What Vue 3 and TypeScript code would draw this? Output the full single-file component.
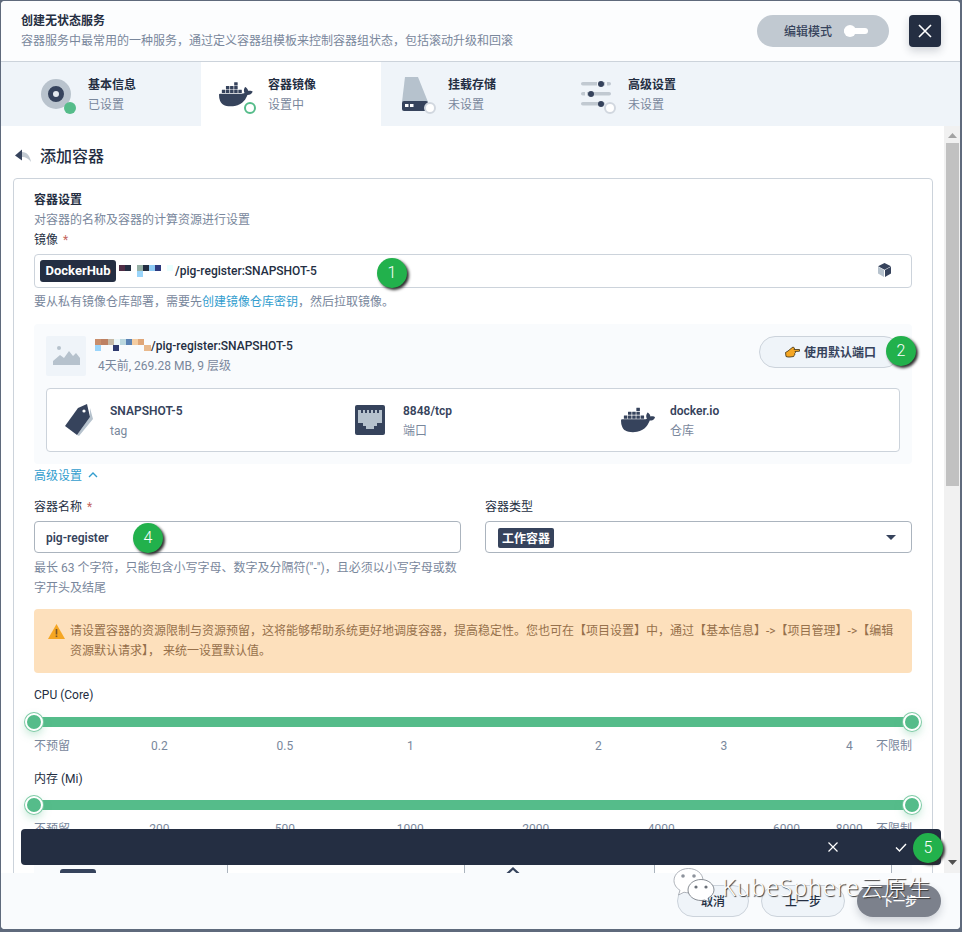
<script setup lang="ts">
interface Mark { label: string; pos: number }
interface Tab { title: string; sub: string; kind: string }

const tabs: Tab[] = [
  { title: '基本信息', sub: '已设置', kind: 'disk' },
  { title: '容器镜像', sub: '设置中', kind: 'docker' },
  { title: '挂载存储', sub: '未设置', kind: 'storage' },
  { title: '高级设置', sub: '未设置', kind: 'sliders' },
]
const cpuMarks: Mark[] = [
  { label: '0.2', pos: 1 }, { label: '0.5', pos: 2 }, { label: '1', pos: 3 },
  { label: '2', pos: 4.5 }, { label: '3', pos: 5.5 }, { label: '4', pos: 6.5 },
]
const memMarks: Mark[] = [
  { label: '200', pos: 1 }, { label: '500', pos: 2 }, { label: '1000', pos: 3 },
  { label: '2000', pos: 4 }, { label: '4000', pos: 5 }, { label: '6000', pos: 6 }, { label: '8000', pos: 6.5 },
]
const left = (m: Mark): string => `${(m.pos / 7) * 100}%`
const whale = 'M13.983 11.078h2.119a.186.186 0 00.186-.185V9.006a.186.186 0 00-.186-.186h-2.119a.185.185 0 00-.185.185v1.888c0 .102.083.185.185.185m-2.954-5.43h2.118a.186.186 0 00.186-.186V3.574a.186.186 0 00-.186-.185h-2.118a.185.185 0 00-.185.185v1.888c0 .102.082.185.185.186m0 2.716h2.118a.187.187 0 00.186-.186V6.29a.186.186 0 00-.186-.185h-2.118a.185.185 0 00-.185.185v1.887c0 .102.082.185.185.186m-2.93 0h2.12a.186.186 0 00.184-.186V6.29a.185.185 0 00-.185-.185H8.1a.185.185 0 00-.185.185v1.887c0 .102.083.185.185.186m-2.964 0h2.119a.186.186 0 00.185-.186V6.29a.185.185 0 00-.185-.185H5.136a.186.186 0 00-.186.185v1.887c0 .102.084.185.186.186m5.893 2.715h2.118a.186.186 0 00.186-.185V9.006a.186.186 0 00-.186-.186h-2.118a.185.185 0 00-.185.185v1.888c0 .102.082.185.185.185m-2.93 0h2.12a.185.185 0 00.184-.185V9.006a.185.185 0 00-.184-.186h-2.12a.185.185 0 00-.184.185v1.888c0 .102.083.185.185.185m-2.964 0h2.119a.185.185 0 00.185-.185V9.006a.185.185 0 00-.184-.186h-2.12a.186.186 0 00-.186.186v1.887c0 .102.084.185.186.185m-2.92 0h2.12a.185.185 0 00.184-.185V9.006a.185.185 0 00-.184-.186h-2.12a.185.185 0 00-.184.185v1.888c0 .102.082.185.185.185M23.763 9.89c-.065-.051-.672-.51-1.954-.51-.338.001-.676.03-1.01.087-.248-1.7-1.653-2.53-1.716-2.566l-.344-.199-.226.327c-.284.438-.49.922-.612 1.43-.23.97-.09 1.882.403 2.661-.595.332-1.55.413-1.744.42H.751a.751.751 0 00-.75.748 11.376 11.376 0 00.692 4.062c.545 1.428 1.355 2.48 2.41 3.124 1.18.723 3.1 1.137 5.275 1.137.983.003 1.963-.086 2.93-.266a12.248 12.248 0 003.823-1.389c.98-.567 1.86-1.288 2.61-2.136 1.252-1.418 1.998-2.997 2.553-4.4h.221c1.372 0 2.215-.549 2.68-1.009.309-.293.55-.65.707-1.046l.098-.288Z'
</script>

<template>
  <div class="screen">
    <div class="modal">
      <header class="head">
        <div class="head-text">
          <div class="strong">创建无状态服务</div>
          <div class="muted">容器服务中最常用的一种服务，通过定义容器组模板来控制容器组状态，包括滚动升级和回滚</div>
        </div>
        <div class="edit-mode">
          <span class="nudge">编辑模式</span>
          <span class="toggle"><i></i></span>
        </div>
        <button class="close">
          <svg width="14" height="14" viewBox="0 0 14 14"><path d="M1 1l12 12M13 1L1 13" stroke="#fff" stroke-width="1.6" fill="none" /></svg>
        </button>
      </header>

      <nav class="tabs">
        <div v-for="(t, i) in tabs" :key="t.kind" class="tab" :class="{ active: i === 1, first: i === 0 }">
          <div class="tab-icon">
            <svg v-if="t.kind === 'disk'" width="40" height="40" viewBox="0 0 40 40">
              <circle cx="20" cy="20" r="15" fill="#b9c3cd" />
              <circle cx="20" cy="20" r="5.500" fill="#e4e9ee" stroke="#36435c" stroke-width="5" />
              <circle cx="34" cy="34" r="6" fill="#55bc8a" />
            </svg>
            <svg v-else-if="t.kind === 'docker'" width="40" height="40" viewBox="0 0 40 40">
              <g transform="translate(3 3.500) scale(1.4)"><path :d="whale" fill="#36435c" /></g>
              <circle cx="34" cy="34" r="5" fill="#fff" stroke="#55bc8a" stroke-width="2" />
            </svg>
            <svg v-else-if="t.kind === 'storage'" width="40" height="40" viewBox="0 0 40 40">
              <path d="M9 3h13l10 25H6z" fill="#b6c2cd" />
              <rect x="6" y="27" width="26" height="10" rx="2" fill="#36435c" />
              <rect x="9" y="30" width="3.500" height="3" fill="#fff" />
              <rect x="14" y="30" width="3.500" height="3" fill="#fff" />
              <circle cx="34" cy="34" r="5" fill="#fff" stroke="#d1d7df" stroke-width="2" />
            </svg>
            <svg v-else width="40" height="40" viewBox="0 0 40 40">
              <g fill="#c1c9d1">
                <rect x="5" y="8" width="30" height="3.600" rx="1.800" />
                <rect x="5" y="18" width="30" height="3.600" rx="1.800" />
                <rect x="5" y="28" width="24" height="3.600" rx="1.800" />
              </g>
              <g fill="#f0f4f8">
                <rect x="21" y="8" width="2" height="4" /><rect x="29" y="8" width="2" height="4" />
                <rect x="9" y="18" width="2" height="4" />
              </g>
              <g fill="#36435c">
                <circle cx="25" cy="10" r="3" /><circle cx="15" cy="20" r="3" /><circle cx="25" cy="30" r="3" />
              </g>
              <circle cx="34" cy="34" r="5" fill="#fff" stroke="#d1d7df" stroke-width="2" />
            </svg>
          </div>
          <div>
            <div class="strong">{{ t.title }}</div>
            <div class="muted">{{ t.sub }}</div>
          </div>
        </div>
      </nav>

      <div class="main">
        <div class="content">
          <div class="back-row">
            <svg width="16" height="14" viewBox="0 0 16 14">
              <path d="M7 3c5 0 8 4 9 10-2-3-5-5-9-5z" fill="#c1c9d1" />
              <path d="M0 6.500L7 .5v11z" fill="#36435c" />
            </svg>
            <span class="nudge">添加容器</span>
          </div>

          <section class="card">
            <div class="strong">容器设置</div>
            <div class="muted">对容器的名称及容器的计算资源进行设置</div>
            <div class="label">镜像 <em>*</em></div>

            <div class="field image-field">
              <span class="tag">DockerHub</span>
              <svg class="blur-a" width="56" height="12" viewBox="0 0 56 12">
                <rect x="0" y="0" width="6" height="6" fill="#4f2d45" />
                <rect x="6" y="0" width="6" height="6" fill="#242e42" />
                <rect x="18" y="0" width="6" height="6" fill="#96b0a5" />
                <rect x="24" y="0" width="6" height="6" fill="#242e42" />
                <rect x="30" y="0" width="6" height="6" fill="#8ecbf5" />
                <rect x="36" y="0" width="6" height="6" fill="#2e3a7e" />
                <rect x="48" y="0" width="6" height="6" fill="#eaffff" />
                <rect x="18" y="6" width="6" height="6" fill="#9ad5fb" />
              </svg>
              <span class="image-name">/pig-register:SNAPSHOT-5</span>
              <svg class="cube" width="13" height="14" viewBox="0 0 13 14">
                <path d="M6.500 0L13 3.300 6.500 6.800 0 3.300z" fill="#36435c" />
                <path d="M0 3.800l6 3.300V14L0 10.600z" fill="#b6c2cd" />
                <path d="M13 3.800L7 7.100V14l6-3.400z" fill="#36435c" />
              </svg>
              <span class="badge b1">1</span>
            </div>
            <div class="hint-one muted">要从私有镜像仓库部署，需要先<a>创建镜像仓库密钥</a>，然后拉取镜像。</div>

            <div class="panel">
              <div class="panel-head">
                <div class="thumb">
                  <svg width="40" height="40" viewBox="0 0 40 40" fill="#b6c2cd">
                    <circle cx="13" cy="12" r="2" />
                    <path d="M7 29v-4l7-6 4 3 5-7 4 5 3-3 4 5v7z" />
                  </svg>
                </div>
                <div class="image-text">
                  <div class="image-line">
                    <svg width="56" height="18" viewBox="0 0 56 18">
                      <rect x="0" y="2" width="6" height="6" fill="#c98e6c" />
                      <rect x="6" y="2" width="7" height="6" fill="#bd8163" />
                      <rect x="13" y="2" width="6" height="6" fill="#c5baa7" />
                      <rect x="19" y="2" width="6" height="6" fill="#eaf6f8" />
                      <rect x="25" y="2" width="6" height="6" fill="#bcd8df" />
                      <rect x="31" y="2" width="6" height="6" fill="#5a82b4" />
                      <rect x="37" y="2" width="6" height="6" fill="#f4cda2" />
                      <rect x="43" y="2" width="6" height="6" fill="#dfa678" />
                      <rect x="49" y="8" width="7" height="6" fill="#e9b98c" />
                      <rect x="0" y="8" width="6" height="6" fill="#9ad5fb" />
                      <rect x="18" y="8" width="6" height="6" fill="#2e3a6e" />
                    </svg>
                    <span class="image-name">/pig-register:SNAPSHOT-5</span>
                  </div>
                  <div class="muted meta">4天前, 269.28 MB, 9 层级</div>
                </div>
                <button class="default-port">
                  <svg width="15" height="12" viewBox="0 0 15 12">
                    <path d="M.5 6.500L3 5l3-2.500L8 1l1.500 1L9 3.500h5.500v1.700L10 5.500l.5 1-.8 1 .2 1.200-1 .8-.2 1L5 11H3L1 10.500z" fill="#f5a623" stroke="#3a2d10" stroke-width=".8" />
                  </svg>
                  <span class="nudge">使用默认端口</span>
                  <span class="badge b2">2</span>
                </button>
              </div>

              <div class="details">
                <div class="detail">
                  <div class="detail-icon tag-ico">
                    <svg width="30" height="34" viewBox="0 0 30 34">
                      <path d="M26 5l3 11-14 17-2-1 13-18z" fill="#b6c2cd" />
                      <path d="M14 5l9-4 3 13-13 18L1 23z" fill="#36435c" />
                      <circle cx="20" cy="8" r="1.600" fill="#fff" />
                    </svg>
                  </div>
                  <div><div class="d-title">SNAPSHOT-5</div><div class="muted">tag</div></div>
                </div>
                <div class="detail">
                  <div class="detail-icon port-ico">
                    <svg width="30" height="30" viewBox="0 0 30 30">
                      <rect width="30" height="30" rx="2" fill="#36435c" />
                      <path d="M3 5h24v13h-5v3h-3v3h-8v-3H8v-3H3z" fill="#b6c2cd" />
                      <path d="M6 5h2v3H6zM10 5h2v3h-2zM14 5h2v3h-2zM18 5h2v3h-2zM22 5h2v3h-2z" fill="#36435c" />
                    </svg>
                  </div>
                  <div><div class="d-title">8848/tcp</div><div class="muted">端口</div></div>
                </div>
                <div class="detail">
                  <div class="detail-icon">
                    <svg width="34" height="34" viewBox="0 0 24 24"><path :d="whale" fill="#36435c" /></svg>
                  </div>
                  <div><div class="d-title">docker.io</div><div class="muted">仓库</div></div>
                </div>
              </div>
            </div>

            <div class="advanced">
              <a class="nudge">高级设置</a>
              <svg width="10" height="6" viewBox="0 0 10 6"><path d="M1 5l4-4 4 4" stroke="#329dce" stroke-width="1.400" fill="none" /></svg>
            </div>

            <div class="two-col">
              <div>
                <div class="label">容器名称 <em>*</em></div>
                <div class="field strong-field name-field">
                  <span class="d-title">pig-register</span>
                  <span class="badge b4">4</span>
                </div>
                <div class="muted name-hint">最长 63 个字符，只能包含小写字母、数字及分隔符("-")，且必须以小写字母或数字开头及结尾</div>
              </div>
              <div>
                <div class="label">容器类型</div>
                <div class="field strong-field type-field">
                  <span class="type-tag">工作容器</span>
                  <svg width="10" height="5" viewBox="0 0 10 5"><path d="M0 0h10L5 5z" fill="#36435c" /></svg>
                </div>
              </div>
            </div>

            <div class="alert">
              <svg width="17" height="15" viewBox="0 0 17 15">
                <path d="M8.500 0L17 15H0z" fill="#f5a623" />
                <rect x="7.700" y="5" width="1.600" height="5.500" fill="#79542a" />
                <rect x="7.700" y="11.500" width="1.600" height="1.600" fill="#79542a" />
              </svg>
              <p>请设置容器的资源限制与资源预留，这将能够帮助系统更好地调度容器，提高稳定性。您也可在【项目设置】中，通过【基本信息】-&gt;【项目管理】-&gt;【编辑资源默认请求】， 来统一设置默认值。</p>
            </div>

            <div class="slider-label cpu">CPU (Core)</div>
            <div class="track"><i class="handle start"></i><i class="handle end"></i></div>
            <div class="marks">
              <span class="edge">不预留</span>
              <span v-for="m in cpuMarks" :key="m.label" class="mark" :style="{ left: left(m) }">{{ m.label }}</span>
              <span class="edge">不限制</span>
            </div>

            <div class="slider-label mem">内存 (Mi)</div>
            <div class="track"><i class="handle start"></i><i class="handle end"></i></div>
            <div class="marks">
              <span class="edge">不预留</span>
              <span v-for="m in memMarks" :key="m.label" class="mark" :style="{ left: left(m) }">{{ m.label }}</span>
              <span class="edge">不限制</span>
            </div>

            <div class="under-row">
              <div class="uc"><i class="mini-tag"></i></div>
              <div class="uc white"></div>
              <div class="uc caret-cell">
                <svg width="14" height="8" viewBox="0 0 14 8"><path d="M1 7l6-5.500L13 7" stroke="#36435c" stroke-width="2.200" fill="none" /></svg>
              </div>
              <div class="uc white"></div>
              <div class="uc"></div>
            </div>
          </section>
        </div>

        <aside class="scrollbar">
          <svg width="9" height="5" viewBox="0 0 9 5"><path d="M4.500 0L9 5H0z" fill="#a3a3a3" /></svg>
          <div class="thumb-bar"></div>
          <div class="scroll-space"></div>
          <svg width="9" height="5" viewBox="0 0 9 5"><path d="M0 0h9L4.500 5z" fill="#505050" /></svg>
        </aside>
      </div>

      <footer class="foot">
        <button class="pill">取消</button>
        <button class="pill">上一步</button>
        <button class="pill primary">下一步</button>
      </footer>

      <div class="confirm-bar">
        <svg width="10" height="10" viewBox="0 0 10 10"><path d="M.5.5l9 9M9.500.5l-9 9" stroke="#fff" stroke-width="1.200" fill="none" /></svg>
        <svg width="12" height="9" viewBox="0 0 12 9"><path d="M1 4.500l3.500 3.500L11 1" stroke="#fff" stroke-width="1.400" fill="none" /></svg>
        <span class="badge b5">5</span>
      </div>
    </div>

    <div class="watermark">
      <svg width="49" height="36" viewBox="0 0 49 36">
        <path d="M15.500 1.500C7.500 1.500 1 6.800 1 13.500c0 4 2.300 7.500 6 9.800L5.500 28l5.500-2.800c1.500.4 3 .6 4.500.6 8 0 14.500-5.400 14.500-12.300S23.500 1.500 15.500 1.500z" fill="#fff" stroke="#9aa0a8" stroke-width=".8" />
        <circle cx="10" cy="9" r="1.800" fill="#8d939c" /><circle cx="21" cy="9" r="1.800" fill="#8d939c" />
        <path d="M28 12.500c-7 0-13 4.600-13 10.500s6 10.500 13 10.500c1.300 0 2.500-.2 3.700-.5l4.300 2-1-3.800c3.500-2 6-5 6-8.200 0-5.900-6-10.500-13-10.500z" fill="#fff" stroke="#6a7078" stroke-width=".8" />
        <circle cx="23" cy="20" r="1.600" fill="#6a7078" /><circle cx="33" cy="20" r="1.600" fill="#6a7078" />
      </svg>
      <span>KubeSphere云原生</span>
    </div>
  </div>
</template>

<style scoped>
.screen {
  position: relative;
  width: 962px;
  height: 932px;
  overflow: hidden;
  background: #5f6a7c;
  font: 12px/20px Roboto, "Noto Sans CJK SC", sans-serif;
  color: #242e42;
}
.modal {
  position: relative;
  display: flex;
  flex-direction: column;
  width: 959px;
  height: 928px;
  margin: 1px 0 0 1px;
  border-radius: 4px;
  overflow: hidden;
  background: #fff;
}
button { font: inherit; padding: 0; cursor: pointer; }
a { color: #329dce; }
p { margin: 0; }

/* text sits one pixel lower in its 20px row */
.strong, .muted, .label, .slider-label, .d-title, .nudge {
  padding-top: 2px;
  line-height: 18px;
}
.strong { font-weight: 600; color: #242e42; }
.muted { color: #79879c; }

.head {
  flex: none;
  display: flex;
  align-items: center;
  height: 60px;
  box-sizing: content-box;
  background: #fcfdfe;
  border-bottom: 1px solid #ccd3db;
  padding-left: 20px;
}
.head-text { flex: 1; align-self: flex-start; margin-top: 9px; }
.edit-mode {
  display: flex;
  align-items: center;
  width: 132px;
  height: 32px;
  box-sizing: border-box;
  padding-left: 27px;
  border-radius: 16px;
  background: #c1c9d1;
  color: #36435c;
  font-weight: 500;
}
.toggle {
  position: relative;
  width: 24px;
  height: 6px;
  margin-left: 12px;
  border-radius: 3px;
  background: #fff;
}
.toggle i {
  position: absolute;
  left: 0;
  top: -3px;
  width: 12px;
  height: 12px;
  border-radius: 50%;
  background: #fff;
}
.close {
  display: flex;
  align-items: center;
  justify-content: center;
  width: 32px;
  height: 32px;
  margin: 0 19px 0 20px;
  border: 0;
  border-radius: 4px;
  background: #242e42;
  box-shadow: 0 4px 8px rgba(36, 46, 66, 0.2);
}

.tabs { flex: none; display: flex; height: 64px; background: #eff4f9; }
.tab {
  display: flex;
  align-items: center;
  gap: 12px;
  width: 180px;
  box-sizing: border-box;
  padding-left: 15px;
}
.tab.first { width: 200px; padding-left: 35px; }
.tab.active { background: #fff; }
.tab-icon { width: 40px; height: 40px; flex: none; }
.tab-icon svg { display: block; }

.main { flex: 1; min-height: 0; display: flex; }
.content { flex: 1; min-width: 0; overflow: hidden; }
.back-row {
  display: flex;
  align-items: center;
  gap: 9px;
  height: 20px;
  margin: 20px 0 12px 14px;
  font-size: 16px;
  font-weight: 500;
}
.card {
  width: 920px;
  box-sizing: border-box;
  margin-left: 12px;
  padding: 10px 20px 0;
  border: 1px solid #ccd3db;
  border-radius: 4px;
}
.label { color: #242e42; }
.label em { color: #c4665e; font-style: normal; margin-left: 2px; }

.field {
  position: relative;
  display: flex;
  align-items: center;
  box-sizing: border-box;
  border: 1px solid #ccd3db;
  border-radius: 4px;
  background: #fff;
}
.image-field { height: 34px; margin-top: 5px; padding-left: 5px; }
.tag {
  width: 76px;
  height: 22px;
  line-height: 22px;
  text-align: center;
  border-radius: 3px;
  background: #242e42;
  color: #fff;
  font-size: 13px;
  font-weight: 700;
}
.blur-a { margin-left: 3px; }
.image-name { font-weight: 500; color: #242e42; }
.cube { position: absolute; right: 20px; top: 8px; }
.hint-one { margin-top: 3px; }

.badge {
  position: absolute;
  width: 30px;
  height: 30px;
  border-radius: 50%;
  background: #22b14c;
  color: #fff;
  font-size: 16px;
  font-weight: 300;
  line-height: 30px;
  text-align: center;
  box-shadow: 2px 2px 3px #2c2c2c;
}
.b1 { left: 342px; top: 3px; }
.b2 { left: 126px; top: -1px; }
.b4 { left: 98px; top: 1px; }
.b5 { left: 892px; top: 4px; }

.panel {
  margin-top: 13px;
  padding: 12px;
  height: 140px;
  box-sizing: border-box;
  border-radius: 4px;
  background: #f9fbfd;
}
.panel-head { display: flex; height: 40px; }
.thumb { width: 40px; height: 40px; background: #eff4f9; border-radius: 2px; }
.image-text { flex: 1; margin-left: 9px; }
.image-line { display: flex; align-items: center; height: 20px; }
.meta { padding-left: 3px; padding-top: 1px; }
.default-port {
  position: relative;
  display: flex;
  align-items: center;
  gap: 4px;
  width: 141px;
  height: 32px;
  box-sizing: border-box;
  padding-left: 25px;
  border: 1px solid #ccd3db;
  border-radius: 16px;
  background: #eff4f9;
  color: #36435c;
  font-weight: 600;
}
.details {
  display: grid;
  grid-template-columns: 293px 267px 1fr;
  height: 64px;
  margin-top: 12px;
  box-sizing: border-box;
  border: 1px solid #ccd3db;
  border-radius: 4px;
  background: #fff;
}
.detail { display: flex; align-items: center; gap: 12px; padding-left: 11px; }
.detail-icon { display: flex; justify-content: center; width: 40px; }
.tag-ico svg { margin-left: 2px; }
.port-ico svg { margin-right: 2px; }
.d-title { font-weight: 600; color: #36435c; }

.advanced { display: flex; align-items: center; gap: 6px; margin-top: 1px; }
.two-col {
  display: grid;
  grid-template-columns: 427px 427px;
  gap: 24px;
  margin-top: 11px;
}
.strong-field { height: 32px; margin-top: 5px; border-color: #abb4be; }
.name-field { padding-left: 11px; }
.type-field { justify-content: space-between; padding: 0 15px 0 12px; }
.type-tag {
  height: 18px;
  line-height: 18px;
  padding: 2px 4px 0;
  margin-top: 2px;
  border-radius: 2px;
  background: #36435c;
  color: #fff;
  font-weight: 700;
}
.name-hint { margin-top: 5px; padding-top: 0; line-height: 20px; }

.alert {
  display: flex;
  gap: 5px;
  height: 64px;
  box-sizing: border-box;
  margin-top: 11px;
  padding: 13px 14px 0;
  border-radius: 4px;
  background: #fde0bc;
  color: #96704b;
  line-height: 19.5px;
}
.alert svg { flex: none; margin-top: 2px; }

.slider-label { color: #242e42; }
.cpu { margin-top: 11px; }
.mem { margin-top: 13px; }
.track {
  position: relative;
  height: 10px;
  margin-top: 13px;
  background: #55bc8a;
}
.mem + .track { margin-top: 12px; }
.handle {
  position: absolute;
  top: -4px;
  width: 14px;
  height: 14px;
  border: 2px solid #fff;
  border-radius: 50%;
  background: #55bc8a;
  box-shadow: 0 0 0 1px #7fcba6, 0 4px 8px rgba(85, 188, 138, 0.35);
}
.handle.start { left: -9px; }
.handle.end { right: -9px; }
.marks {
  position: relative;
  display: flex;
  justify-content: space-between;
  margin-top: 8px;
  padding-top: 2px;
  line-height: 18px;
  color: #79879c;
}
.mark { position: absolute; top: 2px; transform: translateX(-50%); }

.under-row {
  display: grid;
  grid-template-columns: 193px 238px 189px 238px 20px;
  height: 50px;
  margin-top: 12px;
  background: #f9fbfd;
}
.uc.white { background: #fff; border: solid #abb4be; border-width: 0 1px; }
.mini-tag {
  display: block;
  width: 36px;
  height: 20px;
  margin: 19px 0 0 26px;
  border-radius: 3px;
  background: #36435c;
}
.caret-cell svg { display: block; margin: 17px 0 0 41px; }

.scrollbar {
  flex: none;
  display: flex;
  flex-direction: column;
  align-items: center;
  width: 16px;
  box-sizing: border-box;
  padding: 7px 0 8px;
  background: #f1f1f1;
}
.thumb-bar { width: 13px; height: 343px; margin-top: 5px; background: #c1c1c1; }
.scroll-space { flex: 1; }

.foot {
  flex: none;
  display: flex;
  justify-content: flex-end;
  gap: 12px;
  height: 56px;
  box-sizing: border-box;
  padding: 12px 19px 0 0;
  background: #f9fbfd;
}
.pill {
  width: 84px;
  height: 32px;
  padding-top: 2px;
  border: 1px solid #ccd3db;
  border-radius: 16px;
  background: #eff4f9;
  color: #242e42;
  font-weight: 500;
}
.pill:first-child { width: 72px; }
.pill.primary {
  border: 0;
  background: #7c818c;
  color: #fff;
  box-shadow: 0 4px 8px rgba(36, 46, 66, 0.2);
}

.confirm-bar {
  position: absolute;
  left: 20px;
  top: 828px;
  display: flex;
  align-items: center;
  width: 920px;
  height: 36px;
  border-radius: 4px;
  background: #242e42;
}
.confirm-bar svg:first-child { margin-left: 807px; }
.confirm-bar svg:nth-child(2) { margin-left: 57px; }

.watermark {
  position: absolute;
  left: 673px;
  top: 867px;
  display: flex;
  align-items: center;
  color: #fff;
  font-family: "Noto Sans", "Noto Sans CJK SC", sans-serif;
  font-size: 23px;
  font-weight: 300;
  letter-spacing: 1px;
  line-height: 30px;
  white-space: nowrap;
  text-shadow: 1px 1px 1px #333;
}
.watermark span { margin-top: 4px; }
</style>

<style>
html, body { margin: 0; background: #5f6a7c; overflow: hidden; }
</style>
